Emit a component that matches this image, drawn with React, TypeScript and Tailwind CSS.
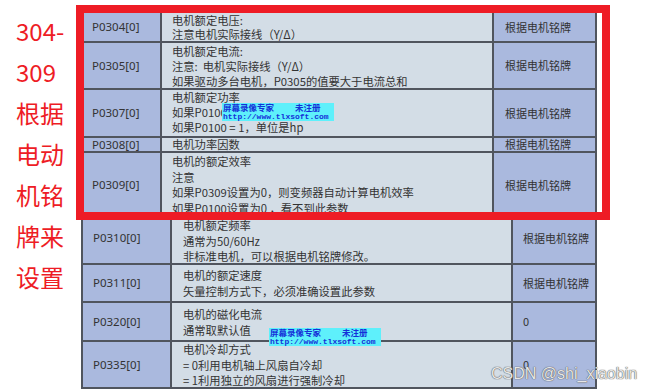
import React from 'react';

type Row = {
  param: string;
  lines: string[];
  value: string;
  h: string;
  pt: string;
  lead: string;
};

const topRows: Row[] = [
  { param: 'P0304[0]', lines: ['电机额定电压:', '注意电机实际接线（Y/Δ）'], value: '根据电机铭牌', h: 'h-[30px]', pt: 'pt-0', lead: 'leading-[14px]' },
  {
    param: 'P0305[0]',
    lines: ['电机额定电流:', '注意:  电机实际接线（Y/Δ）', '如果驱动多台电机，P0305的值要大于电流总和'],
    value: '根据电机铭牌',
    h: 'h-[47px]',
    pt: 'pt-[1px]',
    lead: 'leading-[15px]',
  },
  { param: 'P0307[0]', lines: ['电机额定功率', '如果P0100 = 0，单位是kW', '如果P0100 = 1，单位是hp'], value: '根据电机铭牌', h: 'h-[48px]', pt: 'pt-0', lead: 'leading-[15px]' },
  { param: 'P0308[0]', lines: ['电机功率因数'], value: '根据电机铭牌', h: 'h-[15px]', pt: 'pt-0', lead: 'leading-[13px]' },
  {
    param: 'P0309[0]',
    lines: ['电机的额定效率', '注意', '如果P0309设置为0，则变频器自动计算电机效率', '如果P0100设置为0 ，看不到此参数'],
    value: '根据电机铭牌',
    h: 'h-[66px]',
    pt: 'pt-[1px]',
    lead: 'leading-[15.5px]',
  },
];

const bottomRows: Row[] = [
  { param: 'P0310[0]', lines: ['电机额定频率', '通常为50/60Hz', '非标准电机，可以根据电机铭牌修改。'], value: '根据电机铭牌', h: 'h-[52px]', pt: 'pt-[5px]', lead: 'leading-[15.5px]' },
  { param: 'P0311[0]', lines: ['电机的额定速度', '矢量控制方式下，必须准确设置此参数'], value: '根据电机铭牌', h: 'h-[38px]', pt: 'pt-[2px]', lead: 'leading-[16px]' },
  { param: 'P0320[0]', lines: ['电机的磁化电流', '通常取默认值'], value: '0', h: 'h-[39px]', pt: 'pt-[3px]', lead: 'leading-[16px]' },
  { param: 'P0335[0]', lines: ['电机冷却方式', '= 0利用电机轴上风扇自冷却', '= 1利用独立的风扇进行强制冷却'], value: '0', h: 'h-[47px]', pt: 'pt-0', lead: 'leading-[15.5px]' },
];

const leftWords = ['304-', '309', '根据', '电动', '机铭', '牌来', '设置'];

// the unregistered recorder stamp
function Stamp() {
  return (
    <div className="w-[112px] h-[18px] bg-[#5ef0fb] px-[1px] text-[#1530d8] font-bold">
      <div className="flex h-[9px] items-center text-[8.5px] leading-[9px] font-['Noto_Sans_CJK_SC',sans-serif]">
        <span>屏幕录像专家</span>
        <span className="ml-[21px]">未注册</span>
      </div>
      <div className="h-[9px] text-[8px] leading-[9px] font-['Liberation_Mono',monospace]">http://www.tlxsoft.com</div>
    </div>
  );
}

export default function App() {
  return (
    <div className="relative flex w-[650px] h-[392px] overflow-hidden bg-white text-[#333] font-['Noto_Sans','Noto_Sans_CJK_SC',sans-serif]">
      {/* red caption */}
      <div className="w-[76px] shrink-0 pl-[16px] pt-[10px] text-[24px] leading-[41px] text-[#ee1c25] font-['Noto_Sans_CJK_SC',sans-serif]">
        {leftWords.map((w) => (
          <div key={w}>{w}</div>
        ))}
      </div>

      <div className="flex flex-col">
        {/* highlighted part */}
        <div className="relative z-10 mt-[5px] w-[534px] h-[215px] border-[8px] border-[#ee1c25] bg-white overflow-hidden">
          <div className="w-[513px]">
            {topRows.map((r) => (
              <div
                key={r.param}
                className={`grid grid-cols-[78px_332px_103px] grid-rows-[minmax(0,1fr)] border-b-2 border-[#50555e] ${r.h}`}
              >
                <div className="flex items-center pl-[8px] bg-[#aab9de] border-r-2 border-[#50555e] text-[11.5px]">{r.param}</div>
                <div
                  className={`relative bg-[#d3dde6] border-r-2 border-[#50555e] pl-[10px] text-[11.3px] font-['Noto_Sans_CJK_SC',sans-serif] ${r.pt} ${r.lead}`}
                >
                  {r.lines.map((l) => (
                    <div key={l} className="whitespace-pre">{l}</div>
                  ))}
                  {r.param === 'P0307[0]' && (
                    <div className="absolute left-[60px] top-[13px]">
                      <Stamp />
                    </div>
                  )}
                </div>
                <div className="flex items-center pl-[11px] bg-[#aab9de] border-r-2 border-[#50555e] text-[11px] font-['Noto_Sans_CJK_SC',sans-serif]">
                  {r.value}
                </div>
              </div>
            ))}
          </div>
        </div>

        {/* rest of the table */}
        <div className="relative -mt-[7px] ml-[5px] w-[516px]">
          {bottomRows.map((r) => (
            <div
              key={r.param}
              className={`grid grid-cols-[91px_341px_84px] grid-rows-[minmax(0,1fr)] border-b-2 border-[#50555e] ${r.h}`}
            >
              <div className="flex items-center pl-[10px] bg-[#aab9de] border-l-2 border-r-2 border-[#50555e] text-[11.5px]">{r.param}</div>
              <div
                className={`bg-[#d3dde6] border-r-2 border-[#50555e] pl-[11px] text-[11.3px] font-['Noto_Sans_CJK_SC',sans-serif] ${r.pt} ${r.lead}`}
              >
                {r.lines.map((l) => (
                  <div key={l} className="whitespace-pre">{l}</div>
                ))}
              </div>
              <div className="flex items-center pl-[10px] bg-[#aab9de] border-r-2 border-[#50555e] text-[11px] font-['Noto_Sans_CJK_SC',sans-serif]">
                {r.value}
              </div>
            </div>
          ))}
          <div className="absolute left-[188px] top-[115px]">
            <Stamp />
          </div>
        </div>
      </div>

      <div className="absolute left-[491px] top-[364px] text-[16px] leading-[20px] text-[#e6e6e6] font-['Liberation_Sans',sans-serif] [text-shadow:0_0_1px_#555,0_0_1px_#555]">
        CSDN @shi_xiaobin
      </div>
    </div>
  );
}
